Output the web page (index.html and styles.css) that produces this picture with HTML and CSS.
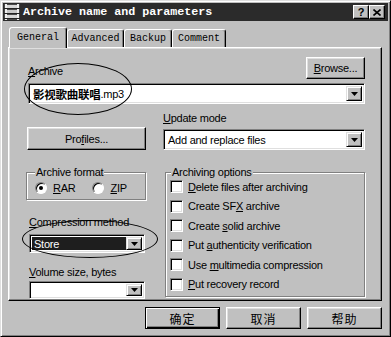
FILE: index.html
```html
<!DOCTYPE html>
<html lang="en">
<head>
  <meta charset="UTF-8">
  <meta name="viewport" content="width=device-width, initial-scale=1.0">
  <title>Archive name and parameters</title>
  <link rel="stylesheet" href="styles.css">
</head>
<body>

  <div class="dialog">
    <div class="titlebar">
      <svg class="app-icon" width="16" height="16" viewBox="0 0 16 16">
        <rect x="0" y="0" width="16" height="16" fill="#4a4a4a"/>
        <rect x="1" y="1" width="14" height="3" fill="#d8d8d8"/>
        <rect x="1" y="6" width="14" height="3" fill="#c8c8c8"/>
        <rect x="1" y="11" width="14" height="3" fill="#d8d8d8"/>
        <rect x="1" y="0" width="2" height="16" fill="#f0f0f0"/>
        <rect x="13" y="0" width="2" height="16" fill="#f0f0f0"/>
        <rect x="0" y="4" width="16" height="1" fill="#222"/>
        <rect x="0" y="9" width="16" height="1" fill="#222"/>
        <rect x="0" y="14" width="16" height="1" fill="#222"/>
      </svg>
      <span class="title">Archive name and parameters</span>
      <div class="caption-buttons">
        <div class="caption-btn">?</div>
        <div class="caption-btn">
          <svg width="8" height="7" viewBox="0 0 8 7">
            <path d="M0.5 0.5 L7.5 6.5 M7.5 0.5 L0.5 6.5" stroke="#000" stroke-width="1.6"/>
          </svg>
        </div>
      </div>
    </div>

    <div class="tabs">
      <div class="tab tab-general active">General</div>
      <div class="tab tab-advanced">Advanced</div>
      <div class="tab tab-backup">Backup</div>
      <div class="tab tab-comment">Comment</div>
    </div>

    <div class="panel">
      <div class="archive-row">
        <span class="label archive-label"><u>A</u>rchive</span>
        <div class="btn btn-browse"><span><u>B</u>rowse...</span></div>
      </div>
      <div class="combo combo-archive">
        <span class="combo-text"><span class="cjk-name">影视歌曲联唱</span><span>.mp3</span></span>
        <span class="drop"><svg width="7" height="4" viewBox="0 0 7 4"><polygon points="0,0 7,0 3.5,4" fill="#000"/></svg></span>
      </div>

      <div class="cols">
        <div class="col-left">
          <div class="btn btn-profiles"><span>Pro<u>f</u>iles...</span></div>

          <fieldset class="group group-format">
            <legend>Archive format</legend>
            <div class="radios">
              <span class="radio-item"><span class="radio checked"></span><span><u>R</u>AR</span></span>
              <span class="radio-item"><span class="radio"></span><span><u>Z</u>IP</span></span>
            </div>
          </fieldset>

          <span class="label label-method"><u>C</u>ompression method</span>
          <div class="combo combo-method">
            <span class="combo-text">Store</span>
            <span class="drop"><svg width="7" height="4" viewBox="0 0 7 4"><polygon points="0,0 7,0 3.5,4" fill="#000"/></svg></span>
          </div>

          <span class="label label-volume"><u>V</u>olume size, bytes</span>
          <div class="combo combo-volume">
            <span class="combo-text"></span>
            <span class="drop"><svg width="7" height="4" viewBox="0 0 7 4"><polygon points="0,0 7,0 3.5,4" fill="#000"/></svg></span>
          </div>
        </div>

        <div class="col-right">
          <span class="label"><u>U</u>pdate mode</span>
          <div class="combo combo-update">
            <span class="combo-text">Add and replace files</span>
            <span class="drop"><svg width="7" height="4" viewBox="0 0 7 4"><polygon points="0,0 7,0 3.5,4" fill="#000"/></svg></span>
          </div>

          <fieldset class="group group-options">
            <legend>Archiving options</legend>
            <div class="checks">
              <div class="check-row"><span class="checkbox"></span><span><u>D</u>elete files after archiving</span></div>
              <div class="check-row"><span class="checkbox"></span><span>Create SF<u>X</u> archive</span></div>
              <div class="check-row"><span class="checkbox"></span><span>Create <u>s</u>olid archive</span></div>
              <div class="check-row"><span class="checkbox"></span><span>Put <u>a</u>uthenticity verification</span></div>
              <div class="check-row"><span class="checkbox"></span><span>Use <u>m</u>ultimedia compression</span></div>
              <div class="check-row"><span class="checkbox"></span><span><u>P</u>ut recovery record</span></div>
            </div>
          </fieldset>
        </div>
      </div>

      <!-- hand-drawn marks over the screenshot -->
      <div class="ellipse ellipse-archive"></div>
      <div class="ellipse ellipse-method"></div>
    </div>

    <div class="actions">
      <div class="btn btn-action btn-default">确定</div>
      <div class="btn btn-action">取消</div>
      <div class="btn btn-action">帮助</div>
    </div>
  </div>

</body>
</html>
```

FILE: styles.css
```css
* {
  box-sizing: border-box;
}

body {
  margin: 0;
  background-color: #c0c0c0;
  font-family: "Liberation Sans", "Noto Sans CJK SC", Arial, sans-serif;
  font-size: 11px;
  letter-spacing: -0.25px;
  color: #000;
}

u {
  text-decoration: underline;
  text-underline-offset: 1px;
}

.dialog {
  width: 391px;
  height: 337px;
  padding: 2px;
  background-color: #c0c0c0;
  border: 1px solid;
  border-color: #dfdfdf #000 #000 #dfdfdf;
  box-shadow: inset 1px 1px 0 #fff, inset -1px -1px 0 #808080;
}

/* title bar */
.titlebar {
  display: flex;
  align-items: center;
  height: 18px;
  padding: 0 3px 0 1px;
  background-color: #2b2b2b;
  color: #fff;
}

.app-icon {
  flex: none;
}

.title {
  flex: 1;
  margin-left: 3px;
  font-family: "Liberation Mono", monospace;
  font-weight: bold;
  font-size: 11.7px;
  letter-spacing: 0;
}

.caption-buttons {
  display: flex;
}

.caption-btn {
  width: 16px;
  height: 14px;
  display: flex;
  align-items: center;
  justify-content: center;
  background-color: #c0c0c0;
  color: #000;
  font-weight: bold;
  font-size: 11px;
  border: 1px solid;
  border-color: #fff #000 #000 #fff;
  box-shadow: inset -1px -1px 0 #808080;
}

/* tabs */
.tabs {
  display: flex;
  align-items: flex-end;
  height: 26px;
  padding-left: 6px;
}

.tab {
  height: 18px;
  display: flex;
  align-items: center;
  justify-content: center;
  border: 1px solid;
  border-bottom: 0;
  border-color: #fff #000 transparent #fff;
  border-radius: 3px 3px 0 0;
  box-shadow: inset -1px 0 0 #808080;
  font-family: "Liberation Mono", monospace;
  font-size: 10px;
  letter-spacing: 0;
}

.tab.active {
  position: relative;
  z-index: 1;
  height: 21px;
  margin-bottom: -1px;
  padding-bottom: 2px;
  background-color: #c0c0c0;
}

.tab-general { width: 58px; }
.tab-advanced { width: 57px; }
.tab-backup { width: 48px; }
.tab-comment { width: 54px; }

/* tab page */
.panel {
  position: relative;
  width: 374px;
  height: 254px;
  margin-left: 5px;
  padding: 9px 16px 0 17px;
  border: 1px solid;
  border-color: #fff #000 #000 #fff;
  box-shadow: inset -1px -1px 0 #808080, inset 1px 1px 0 #dfdfdf;
}

.label {
  display: block;
  line-height: 13px;
  white-space: nowrap;
}

.btn {
  display: flex;
  align-items: center;
  justify-content: center;
  background-color: #c0c0c0;
  border: 1px solid;
  border-color: #fff #000 #000 #fff;
  box-shadow: inset -1px -1px 0 #808080, inset 1px 1px 0 #dfdfdf;
}

.archive-row {
  display: flex;
  justify-content: space-between;
  align-items: flex-end;
  height: 22px;
}

.archive-label {
  margin-left: 2px;
  margin-bottom: 1px;
}

.btn-browse {
  width: 59px;
  height: 22px;
}

.combo {
  display: flex;
  align-items: center;
  padding: 2px;
  background-color: #fff;
  border: 1px solid;
  border-color: #808080 #fff #fff #808080;
  box-shadow: inset 1px 1px 0 #000, inset -1px -1px 0 #dfdfdf;
}

.combo-text {
  flex: 1;
  align-self: stretch;
  display: flex;
  align-items: center;
  padding-left: 2px;
  white-space: nowrap;
  overflow: hidden;
}

.drop {
  flex: none;
  align-self: stretch;
  width: 16px;
  display: flex;
  align-items: center;
  justify-content: center;
  background-color: #c0c0c0;
  border: 1px solid;
  border-color: #dfdfdf #000 #000 #dfdfdf;
  box-shadow: inset 1px 1px 0 #fff, inset -1px -1px 0 #808080;
}

.combo-archive {
  height: 21px;
  margin: 4px 0 0 2px;
}

.cjk-name {
  font-weight: bold;
  font-size: 11.5px;
}

.cols {
  display: flex;
  gap: 17px;
}

.col-left {
  width: 120px;
}

.col-right {
  width: 202px;
  padding-top: 8px;
}

.btn-profiles {
  width: 119px;
  height: 23px;
  margin: 23px 0 0 1px;
}

.combo-update {
  height: 21px;
  margin-top: 4px;
}

/* group boxes */
.group {
  margin: 16px 0 0 0;
  border: 1px solid #808080;
  box-shadow: inset 1px 1px 0 #fff, 1px 1px 0 #fff;
  min-width: 0;
}

.group legend {
  padding: 0 1px;
  line-height: 13px;
  background-color: #c0c0c0;
}

.group-format {
  width: 120px;
  padding: 0 8px 5px 8px;
}

.radios {
  display: flex;
  gap: 17px;
  height: 13px;
  margin-top: 2px;
}

.radio-item {
  display: flex;
  align-items: center;
  gap: 6px;
}

.radio {
  position: relative;
  width: 12px;
  height: 12px;
  border-radius: 50%;
  background-color: #fff;
  border: 1px solid;
  border-color: #808080 #fff #fff #808080;
  box-shadow: inset 1px 1px 0 #000;
}

.radio.checked::after {
  content: "";
  position: absolute;
  left: 3px;
  top: 3px;
  width: 4px;
  height: 4px;
  border-radius: 50%;
  background-color: #000;
}

.group-options {
  width: 200px;
  margin-left: 2px;
  padding: 0 4px 2px 4px;
}

.group-options legend {
  margin-left: 1px;
}

.checks {
  margin-top: -2px;
}

.check-row {
  display: flex;
  align-items: center;
  gap: 5px;
  height: 19.5px;
  white-space: nowrap;
}

.checkbox {
  flex: none;
  width: 13px;
  height: 13px;
  background-color: #fff;
  border: 1px solid;
  border-color: #808080 #fff #fff #808080;
  box-shadow: inset 1px 1px 0 #000, inset -1px -1px 0 #dfdfdf;
}

.label-method {
  margin: 16px 0 0 3px;
}

.combo-method {
  width: 116px;
  height: 19px;
  margin: 5px 0 0 3px;
}

.combo-method .combo-text {
  background-color: #1e1e1e;
  color: #fff;
}

.label-volume {
  margin: 13px 0 0 3px;
}

.combo-volume {
  width: 116px;
  height: 18px;
  margin: 2px 0 0 3px;
}

/* pen marks */
.ellipse {
  position: absolute;
  border: 1px solid #000;
  border-radius: 50%;
  pointer-events: none;
}

.ellipse-archive {
  left: 15px;
  top: 15px;
  width: 108px;
  height: 52px;
}

.ellipse-method {
  left: 13px;
  top: 172px;
  width: 136px;
  height: 38px;
}

/* bottom buttons */
.actions {
  display: flex;
  justify-content: flex-end;
  gap: 6px;
  margin-top: 6px;
  padding-right: 6px;
}

.btn-action {
  width: 75px;
  height: 22px;
  font-family: "Noto Sans CJK SC", sans-serif;
  font-size: 12px;
  letter-spacing: 1px;
}

.btn-default {
  border: 1px solid #000;
  box-shadow: inset 1px 1px 0 #fff, inset -1px -1px 0 #000, inset -2px -2px 0 #808080;
}
```
